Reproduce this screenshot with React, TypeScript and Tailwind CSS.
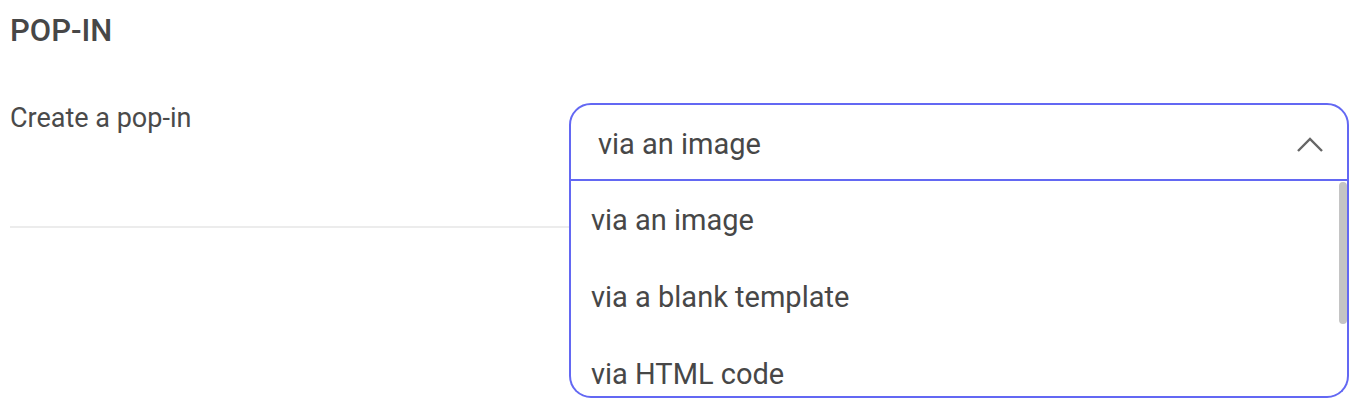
import React from "react";

export default function App() {
  const options = ["via an image", "via a blank template", "via HTML code"];
  return (
    <div className="h-[410px] overflow-hidden bg-white pl-[10px] pr-[16px] font-['Roboto','Liberation_Sans',sans-serif] text-[#444444]">
      <h2 className="pt-[15px] text-[31px] font-medium leading-[31px] text-[#474747]">POP-IN</h2>
      <div className="mt-[57px] flex h-[125px] border-b-2 border-[#ececec]">
        <div className="w-[559px] pt-[2px] text-[27px] leading-[27px] text-[#4a4a4a]">Create a pop-in</div>
        <div className="relative flex-1 self-start">
          <div className="flex h-[78px] items-center justify-between rounded-t-[22px] border-2 border-[#6368f3] bg-white pl-[27px] pr-[22px]">
            <span className="pt-[5px] text-[29px] leading-[29px] text-[#474747]">via an image</span>
            <svg width="30" height="18" viewBox="0 0 30 18" fill="none" className="mt-[4px]">
              <polyline points="3,16 15,4 27,16" stroke="#666666" strokeWidth="2.4" />
            </svg>
          </div>
          <div className="absolute left-0 right-0 top-full z-10 h-[217px] overflow-hidden rounded-b-[22px] border-x-2 border-b-2 border-[#6368f3] bg-white">
            {options.map((o) => (
              <div key={o} className="flex h-[77px] items-center pl-[20px] pt-[1px] text-[29px] leading-[29px] text-[#474747]">
                {o}
              </div>
            ))}
            <div className="absolute right-0 top-[1px] h-[142px] w-[8px] rounded-full bg-[#c4c4c4]" />
          </div>
        </div>
      </div>
    </div>
  );
}
